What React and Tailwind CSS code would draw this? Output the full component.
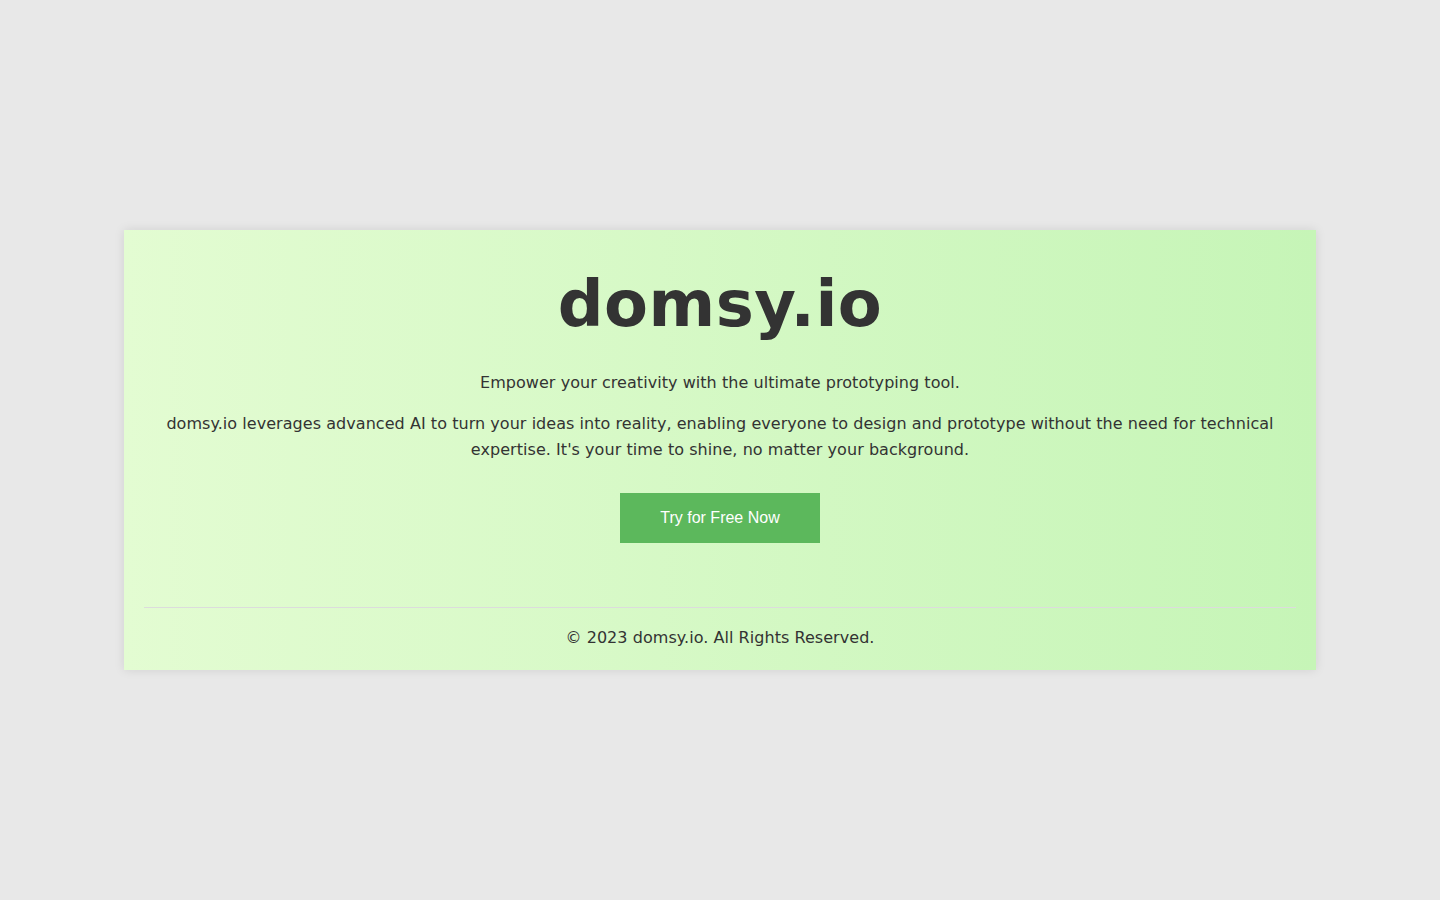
export default function App() {
  return (
    <div className="min-h-screen bg-[#e8e8e8] flex items-center justify-center font-['DejaVu_Sans',sans-serif] text-[#333]">
      <div className="w-[1192px] bg-linear-to-r from-[#e3fcd2] to-[#c6f5b7] shadow-[0_0_10px_rgba(0,0,0,0.1)] px-5 pt-[37px] pb-[19px] text-center tracking-[0.05px]">
        <h1 className="text-[64px] leading-[75px] font-bold tracking-[0.5px]">domsy.io</h1>
        <p className="mt-[28px] text-base leading-[25.6px]">
          Empower your creativity with the ultimate prototyping tool.
        </p>
        <p className="mt-[15px] text-base leading-[25.6px] px-5">
          domsy.io leverages advanced AI to turn your ideas into reality, enabling everyone to design and prototype without the need for technical expertise. It's your time to shine, no matter your background.
        </p>
        <button className="mt-[31px] w-[200px] h-[50px] bg-[#5cb85c] text-white text-base tracking-normal font-['Liberation_Sans',Arial,sans-serif]">
          Try for Free Now
        </button>
        <footer className="mt-16 border-t border-[#dcdcdc] pt-[17px]">
          <p className="text-base leading-[25.6px]">© 2023 domsy.io. All Rights Reserved.</p>
        </footer>
      </div>
    </div>
  )
}
